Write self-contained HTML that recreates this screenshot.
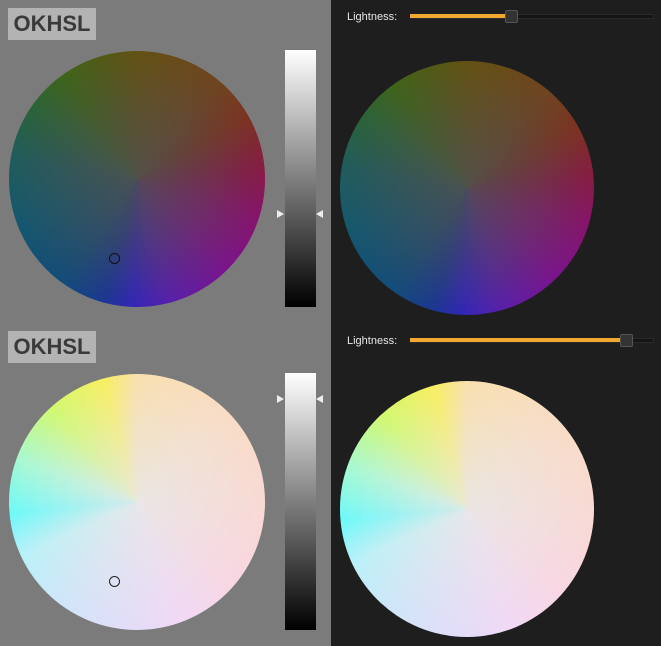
<!DOCTYPE html>
<html><head><style>
body{margin:0;width:661px;height:646px;position:relative;overflow:hidden;background:#1e1e1e;font-family:"Liberation Sans",sans-serif}
.left{position:absolute;left:0;top:0;width:331px;height:646px;background:#7b7b7b}
.lbl{position:absolute;left:8px;width:88px;height:32px;background:#b3b3b3;color:#3a3a3a;font-weight:bold;font-size:22px;line-height:32px;text-align:center}
.c{position:absolute;border-radius:50%}
.c::after{content:"";position:absolute;inset:0;border-radius:50%}
.d{background:conic-gradient(from 0deg,#6a5200,#7a4010 40deg,#8a2a10 60deg,#9a0a40 85deg,#9a0070 105deg,#8a00a0 135deg,#5a10c8 165deg,#2818d8 182deg,#0a2ea8 195deg,#004a88 215deg,#005a78 250deg,#106060 280deg,#206a30 305deg,#3a6a08 325deg,#6a5200)}
.d::after{background:radial-gradient(circle,rgba(80,80,80,0.9) 0%,rgba(80,80,80,0.55) 40%,rgba(80,80,80,0.1) 85%,rgba(80,80,80,0) 100%)}
.l{background:conic-gradient(from 0deg,#ffdc9a,#ffd8b8 45deg,#ffd4cc 90deg,#ffd0e0 130deg,#f4d2fa 160deg,#dcdaff 190deg,#c8e4ff 215deg,#a8f4ff 245deg,#40ffff 265deg,#90ffc8 290deg,#c8ff40 318deg,#fff030 345deg,#ffdc9a)}
.l::after{background:radial-gradient(circle,rgba(232,232,232,0.9) 0%,rgba(232,232,232,0.5) 45%,rgba(232,232,232,0) 100%)}
.bar{position:absolute;left:285px;width:31px;height:257px;background:linear-gradient(#fff,#000)}
.tri{position:absolute;width:0;height:0;border-top:4px solid transparent;border-bottom:4px solid transparent}
.tr{border-left:7px solid #eee}
.tl{border-right:7px solid #eee}
.mk{position:absolute;width:9px;height:9px;border:1.5px solid #111;border-radius:50%}
.sl{position:absolute;color:#e8e8e8;font-size:11px;left:347px}
.track{position:absolute;left:410px;width:242px;height:3px;background:#151515;border:1px solid #2a2a2a}
.fill{position:absolute;left:410px;height:4px;background:#f2a830}
.thumb{position:absolute;width:11px;height:11px;background:#333;border:1px solid #555;border-radius:2px}
</style></head><body>
<div class="left"></div>
<div class="lbl" style="top:8px">OKHSL</div>
<div class="c d" style="left:9px;top:51px;width:256px;height:256px"></div>
<div class="mk" style="left:109px;top:253px"></div>
<div class="bar" style="top:50px"></div>
<div class="tri tr" style="left:277px;top:210px"></div>
<div class="tri tl" style="left:316px;top:210px"></div>

<div class="lbl" style="top:331px">OKHSL</div>
<div class="c l" style="left:9px;top:374px;width:256px;height:256px"></div>
<div class="mk" style="left:109px;top:576px;border-color:#222"></div>
<div class="bar" style="top:373px"></div>
<div class="tri tr" style="left:277px;top:395px"></div>
<div class="tri tl" style="left:316px;top:395px"></div>

<div class="sl" style="top:11px">Lightness:</div>
<div class="track" style="top:14px"></div>
<div class="fill" style="top:14px;width:100px"></div>
<div class="thumb" style="left:505px;top:10px"></div>
<div class="c d" style="left:340px;top:61px;width:254px;height:254px"></div>

<div class="sl" style="top:335px">Lightness:</div>
<div class="track" style="top:338px"></div>
<div class="fill" style="top:338px;width:212px"></div>
<div class="thumb" style="left:620px;top:334px"></div>
<div class="c l" style="left:340px;top:381px;width:254px;height:256px"></div>
</body></html>
